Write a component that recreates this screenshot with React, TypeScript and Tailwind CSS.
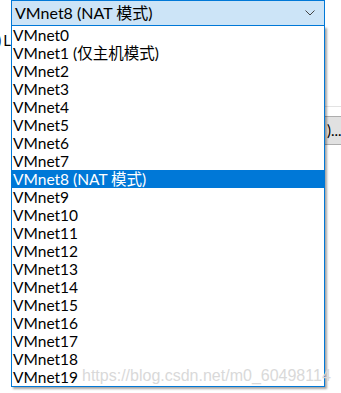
const items = [
  'VMnet0',
  'VMnet1 (仅主机模式)',
  'VMnet2',
  'VMnet3',
  'VMnet4',
  'VMnet5',
  'VMnet6',
  'VMnet7',
  'VMnet8 (NAT 模式)',
  'VMnet9',
  'VMnet10',
  'VMnet11',
  'VMnet12',
  'VMnet13',
  'VMnet14',
  'VMnet15',
  'VMnet16',
  'VMnet17',
  'VMnet18',
  'VMnet19',
];

const font = { fontFamily: 'Lato, "Noto Sans CJK SC", sans-serif' };

export default function App() {
  return (
    <div className="relative w-[341px] h-[393px] bg-white overflow-hidden text-black flex" style={font}>
      {/* dialog edge on the left, mostly hidden behind the popup */}
      <div className="w-[11px] shrink-0 flex justify-end overflow-hidden pt-[31px]">
        <span className="whitespace-nowrap text-[15px] leading-[18px]">
          )<span className="ml-[2px]">L</span>
        </span>
      </div>

      {/* combobox + open list */}
      <div className="relative z-10 w-[314px] shrink-0">
        <div className="h-[26px] bg-[#cce4f7] border border-[#0078d7] flex items-center justify-between pl-[3px] pr-[9px]">
          <span className="text-[16px] leading-[18px]">VMnet8 (NAT 模式)</span>
          <svg width="10" height="6" viewBox="0 0 10 6" fill="none" stroke="#444" strokeWidth="1">
            <path d="M0.5 0.5 L5 5 L9.5 0.5" />
          </svg>
        </div>
        <ul className="bg-white border border-[#0078d7] border-t-0 shadow-[2px_2px_2px_rgba(0,0,0,0.35)]">
          {items.map((it) => (
            <li
              key={it}
              className={
                'h-[18px] pl-[1px] text-[15.5px] leading-[18px] whitespace-nowrap ' +
                (it.startsWith('VMnet8') ? 'bg-[#0078d7] text-white' : '')
              }
            >
              {it}
            </li>
          ))}
        </ul>
      </div>

      {/* dialog edge on the right */}
      <div className="flex-1 min-w-0 pt-[106px] overflow-hidden">
        <div className="h-px bg-[#e3e3e3]" />
        <div className="mt-[9px] h-[29px] w-[40px] bg-[#e1e1e1] border-y border-[#adadad] flex items-center pl-[2px] text-[15px] whitespace-nowrap">
          )...
        </div>
      </div>

      {/* watermark */}
      <div
        className="absolute z-20 left-[82px] top-[367px] text-[16px] leading-[18px] text-[#d9d9d9] whitespace-nowrap"
        style={{ fontFamily: '"Liberation Sans", Arial, sans-serif' }}
      >
        https://blog.csdn.net/m0_60498114
      </div>
    </div>
  );
}
